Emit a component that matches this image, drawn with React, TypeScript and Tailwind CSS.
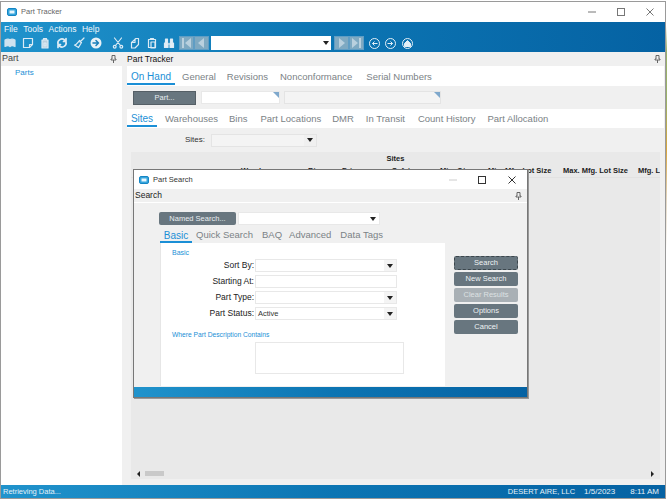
import React from "react";

const Logo = () => (
  <svg width="10" height="8" viewBox="0 0 10 8" className="shrink-0">
    <rect x="0.5" y="0.5" width="9" height="7" rx="1.5" fill="#35a5dc" stroke="#1585c4" />
    <rect x="2.5" y="2.5" width="5" height="3" fill="#e8f6fd" />
  </svg>
);

const Pin = () => (
  <svg width="7" height="8" viewBox="0 0 7 8" className="shrink-0">
    <path d="M2 .5h3v3.5h1v1H1V4h1zM3.5 5v3" fill="none" stroke="#666" strokeWidth="1" />
  </svg>
);

const Caret = () => (
  <svg width="6" height="4" viewBox="0 0 6 4"><path d="M0 0h6L3 4z" fill="#222" /></svg>
);

const T = ({ d, w = 17 }: { d: React.ReactNode; w?: number }) => (
  <div className="flex justify-center items-center h-[15px] shrink-0" style={{ width: w }}>
    <svg width="12" height="12" viewBox="0 0 12 12" fill="none" stroke="#dcebf5" strokeWidth="1.2" strokeLinecap="round" strokeLinejoin="round">{d}</svg>
  </div>
);

const NavBox = ({ children }: { children: React.ReactNode }) => (
  <div className="w-[15px] h-[14px] bg-[#7ea9c2] border border-[#5f9dc4] flex items-center justify-center shrink-0">
    <svg width="9" height="10" viewBox="0 0 9 10" fill="#b9d0de">{children}</svg>
  </div>
);

const Circ = ({ children }: { children: React.ReactNode }) => (
  <div className="w-[11px] h-[11px] rounded-full border border-[#e3eff7] flex items-center justify-center shrink-0">
    <svg width="7" height="7" viewBox="0 0 7 7" fill="none" stroke="#e3eff7" strokeWidth="1">{children}</svg>
  </div>
);

const DBtn = ({ label, dim, cls = "" }: { label: string; dim?: boolean; cls?: string }) => (
  <div className={`w-[64px] h-[14px] rounded-[2px] flex items-center justify-center text-[7.5px] leading-none ${dim ? "bg-[#a9b0b5] text-[#dde1e3]" : "bg-[#68767f] text-[#eef2f4]"} ${cls}`}>{label}</div>
);

const Field = ({ value, caret, w = "w-[142px]" }: { value?: string; caret?: boolean; w?: string }) => (
  <div className={`${w} h-[13px] bg-white border border-[#e8e8e8] flex items-center justify-between pl-[2px] text-[7.5px] text-[#333]`}>
    <span>{value}</span>
    {caret && <div className="w-[12px] h-full bg-[#f4f4f4] flex items-center justify-center"><Caret /></div>}
  </div>
);

const Row = ({ label, children }: { label: string; children: React.ReactNode }) => (
  <div className="flex items-center h-[13px] mb-[3px]">
    <div className="w-[94px] pr-[1px] text-right text-[8.5px] text-[#222] leading-none">{label}</div>
    {children}
  </div>
);

export default function App() {
  return (
    <div className="relative w-[667px] h-[500px] overflow-hidden bg-white flex flex-col text-[#222] font-['Liberation_Sans',Arial,sans-serif]">
      <div className="h-[1px] overflow-hidden bg-white flex items-end pl-[14px] text-[10px] leading-[10px] text-[#777] whitespace-nowrap">
        <span className="w-[118px]">SERVICE DASHBOARD</span><span className="w-[58px]">PARTS</span><span className="w-[50px]">ROLL</span><span className="w-[116px]">SERVICE DASHBOARD</span><span>PARTS WI-DGET</span>
      </div>
      <div className="flex-1 flex min-h-0">
        <div className="w-[666px] flex flex-col border-x border-b border-t border-[#9a9a9a] min-h-0">
          {/* title bar */}
          <div className="h-[20px] bg-white flex items-center pl-[6px] shrink-0">
            <Logo />
            <span className="ml-[4px] text-[7.5px] text-[#666]">Part Tracker</span>
            <div className="ml-auto flex items-center">
              <svg width="8" height="2" className="mr-[21px]"><path d="M0 1h8" stroke="#777" /></svg>
              <svg width="8" height="8" className="mr-[21px]"><rect x=".5" y=".5" width="7" height="7" fill="none" stroke="#777" /></svg>
              <svg width="8" height="8" className="mr-[11px]"><path d="M.5.5l7 7M7.5.5l-7 7" stroke="#777" /></svg>
            </div>
          </div>
          {/* blue band */}
          <div className="h-[30px] shrink-0 bg-[linear-gradient(90deg,#2093cc,#0c75b3_50%,#0562a3)] flex flex-col">
            <div className="h-[14px] flex items-center text-[8.5px] text-[#f2f8fc] pl-[3px] gap-[5.5px] leading-none">
              <span>File</span><span>Tools</span><span>Actions</span><span>Help</span>
            </div>
            <div className="h-[16px] pb-[2px] flex items-center">
              <T w={18} d={<path d="M6 3C5 2 3 2 1 3v6.500c2-1 4-1 5 0 1-1 3-1 5 0V3C9 2 7 2 6 3zM6 3v6.500" fill="#cfe3f0" stroke="#cfe3f0" />} />
              <T d={<path d="M1.500 1.500h9v6l-3 3h-6zM10.500 7.500h-3v3" />} />
              <T d={<path d="M3 3h6v8H3zM4.500 3V1.500h3V3M5 6h2v3H5z" fill="#b9cfdd" />} />
              <T d={<path d="M2 7a4 4 0 0 1 6.500-4L10 4.500M10 5a4 4 0 0 1-6.500 4L2 7.500M10 1.500v3H7.500M2 10.500v-3h2.500" strokeWidth="1.700" />} />
              <T d={<path d="M11 1L7 5M6.500 3.500l2 2-3 5L1.500 8c2 0 3-2 5-4.500z" />} />
              <T d={<><circle cx="6" cy="6" r="5.500" fill="#e8f2f8" stroke="none" /><path d="M3 6h5.500M6 3.500L8.500 6 6 8.500" stroke="#1a7fb9" strokeWidth="1.500" /></>} />
              <div className="w-[5px]" />
              <T d={<><path d="M2.500 1l6 7.500M9.500 1l-6 7.500" /><circle cx="2.700" cy="9.800" r="1.400" /><circle cx="9.300" cy="9.800" r="1.400" /></>} />
              <T d={<path d="M7 1.500h2.500v6L6 11H2.500V5.500zM2.500 5.500H6V2" />} />
              <T d={<path d="M2.500 2.500h7v8h-7zM4.500 2.500V1.500h3v1M5 5h4v6H5z" />} />
              <T d={<path d="M1.500 6h3.500v4.500H1.500zM7 6h3.500v4.500H7zM2.500 6V2h2v4M7.500 6V2h2v4M5 7h2" fill="#e3eff7" />} />
              <div className="w-[2px]" />
              <NavBox><path d="M0 0h2v10H0zM9 0v10L3 5z" /></NavBox>
              <NavBox><path d="M7 0v10L1 5z" /></NavBox>
              <div className="w-[120px] h-[14px] ml-[2px] bg-white flex items-center justify-end pr-[2px] shrink-0"><Caret /></div>
              <div className="w-[3px]" />
              <NavBox><path d="M2 0v10l6-5z" /></NavBox>
              <NavBox><path d="M0 0v10l6-5zM7 0h2v10H7z" /></NavBox>
              <div className="w-[5px]" />
              <Circ><path d="M6.500 3.500h-5M3.500 1.500l-2 2 2 2" /></Circ>
              <div className="w-[5px]" />
              <Circ><path d="M.500 3.500h5M3.500 1.500l2 2-2 2" /></Circ>
              <div className="w-[6px]" />
              <Circ><path d="M.500 3.500l3-3 3 3v3h-6z" fill="#e3eff7" /></Circ>
            </div>
          </div>
          {/* body */}
          <div className="flex-1 min-h-0 flex bg-[#f0f0f0]">
            <div className="w-[121px] flex flex-col shrink-0">
              <div className="h-[14px] flex items-center justify-between pl-[1px] pr-[5px] text-[9px] shrink-0"><span className="text-[#444]">Part</span><Pin /></div>
              <div className="flex-1 bg-white pl-[14px] pt-[1px] text-[8px] text-[#1b8fd6] leading-[12px]">Parts</div>
            </div>
            <div className="flex-1 flex flex-col min-w-0 pl-[5px]">
              <div className="h-[14px] flex items-center justify-between pr-[4px] text-[8.5px] text-[#111] shrink-0"><span>Part Tracker</span><Pin /></div>
              <div className="h-[20px] bg-white mr-[1px] flex items-stretch text-[9.5px] text-[#7b8286] shrink-0 whitespace-nowrap">
                <div className="w-[48px] mb-[1px] border-b-2 border-[#1b8fd6] text-[#1b8fd6] text-center pt-[3px] text-[10px]">On Hand</div>
                <span className="ml-[7px] pt-[4px]">General</span>
                <span className="ml-[11px] pt-[4px]">Revisions</span>
                <span className="ml-[12px] pt-[4px]">Nonconformance</span>
                <span className="ml-[14px] pt-[4px]">Serial Numbers</span>
              </div>
              <div className="h-[23px] flex items-center pl-[6px] shrink-0">
                <div className="w-[63px] h-[14px] bg-[#68767f] border border-[#555f66] text-[7.5px] text-[#e9edef] flex items-center justify-center">Part...</div>
                <div className="relative w-[79px] h-[13px] bg-white ml-[5px] border border-[#e8e8e8]"><div className="absolute top-0 right-0 w-0 h-0 border-l-[6px] border-l-transparent border-t-[6px] border-t-[#7fa8cc]" /></div>
                <div className="relative w-[157px] h-[13px] bg-[#f4f4f4] ml-[4px] border border-[#e4e4e4]"><div className="absolute top-0 right-0 w-0 h-0 border-l-[6px] border-l-transparent border-t-[6px] border-t-[#7fa8cc]" /></div>
              </div>
              <div className="h-[19px] bg-white mr-[1px] flex items-stretch text-[9.5px] text-[#7b8286] shrink-0 whitespace-nowrap">
                <div className="w-[30px] mb-[1px] border-b-2 border-[#1b8fd6] text-[#1b8fd6] text-center pt-[2px] text-[10px]">Sites</div>
                <span className="ml-[8px] pt-[3px]">Warehouses</span>
                <span className="ml-[11px] pt-[3px]">Bins</span>
                <span className="ml-[13px] pt-[3px]">Part Locations</span>
                <span className="ml-[11px] pt-[3px]">DMR</span>
                <span className="ml-[12px] pt-[3px]">In Transit</span>
                <span className="ml-[13px] pt-[3px]">Count History</span>
                <span className="ml-[12px] pt-[3px]">Part Allocation</span>
              </div>
              <div className="h-[24px] flex items-center shrink-0 pl-[58px] text-[8px] text-[#333]">
                <span className="w-[26px]">Sites:</span>
                <div className="w-[106px] h-[13px] bg-[#f4f4f4] border border-[#e4e4e4] flex justify-end"><div className="w-[12px] bg-[#f0f0f0] flex items-center justify-center"><Caret /></div></div>
              </div>
              <div className="flex-1 ml-[4px] mr-[5px] mb-[6px] bg-[#e9e9e9] flex flex-col min-h-0">
                <div className="h-[13px] text-center text-[7.5px] font-bold text-[#222] flex items-center justify-center">Sites</div>
                <div className="h-[13px] flex items-center text-[7.5px] font-bold text-[#222] whitespace-nowrap overflow-hidden border-b border-[#e2e2e2] pl-[110px]">
                  <span className="w-[67px] shrink-0">Warehouse</span>
                  <span className="w-[34px] shrink-0">Bin</span>
                  <span className="w-[50px] shrink-0">Primary</span>
                  <span className="w-[48px] shrink-0">Safety</span>
                  <span className="w-[48px] shrink-0">Min. Qty</span>
                  <span className="w-[75px] shrink-0">Min. Mfg. Lot Size</span>
                  <span className="w-[75px] shrink-0">Max. Mfg. Lot Size</span>
                  <span className="shrink-0">Mfg. L</span>
                </div>
                <div className="flex-1" />
                <div className="h-[11px] flex items-center px-[6px] justify-between">
                  <div className="flex items-center gap-[3px]">
                    <svg width="3" height="6"><path d="M3 0v6L0 3z" fill="#222" /></svg>
                    <div className="w-[19px] h-[5px] ml-[2px] bg-[#c9c9c9]" />
                  </div>
                  <svg width="3" height="6"><path d="M0 0v6l3-3z" fill="#222" /></svg>
                </div>
              </div>
            </div>
          </div>
          {/* status */}
          <div className="h-[13px] shrink-0 bg-[linear-gradient(90deg,#2093cc,#0c75b3_50%,#0562a3)] flex items-center pl-[2px] text-[7.5px] text-[#e6f1f8] leading-none">
            <span>Retrieving Data...</span>
            <span className="ml-auto text-[7.5px]">DESERT AIRE, LLC</span>
            <span className="ml-[9px] text-[8px]">1/5/2023</span>
            <span className="ml-[15px] mr-[6px] text-[8px]">8:11 AM</span>
          </div>
        </div>
        <div className="w-[1px] bg-[linear-gradient(180deg,#fff_5%,#9bb26a_10%,#9bb26a_20%,#d9a63f_30%,#e4d8c4_40%,#fff_50%)]" />
      </div>
      <div className="h-[1px] bg-white shrink-0" />

      {/* dialog */}
      <div className="absolute left-[133px] top-[169px] w-[395px] h-[229px] border border-[#777] bg-[#f0f0f0] flex flex-col shadow-[1px_1px_0_#999]">
        <div className="h-[19px] bg-white flex items-center pl-[5px] shrink-0">
          <Logo />
          <span className="ml-[4px] text-[7.5px] text-[#333]">Part Search</span>
          <div className="ml-auto flex items-center">
            <svg width="8" height="2" className="mr-[21px]"><path d="M0 1h8" stroke="#ccc" /></svg>
            <svg width="8" height="8" className="mr-[22px]"><rect x=".5" y=".5" width="7" height="7" fill="none" stroke="#333" /></svg>
            <svg width="8" height="8" className="mr-[11px]"><path d="M.5.5l7 7M7.5.5l-7 7" stroke="#333" /></svg>
          </div>
        </div>
        <div className="h-[14px] flex items-center justify-between pl-[1px] pr-[5px] text-[8.5px] text-[#222] border-b border-white shrink-0"><span>Search</span><Pin /></div>
        <div className="flex-1 flex min-h-0 pl-[25px]">
          <div className="w-[286px] flex flex-col">
            <div className="flex items-center pt-[9px] shrink-0">
              <div className="w-[77px] h-[13px] bg-[#68767f] rounded-[2px] text-[7.5px] text-[#e9edef] flex items-center justify-center">Named Search...</div>
              <div className="w-[142px] h-[13px] ml-[2px] bg-white border border-[#e8e8e8] flex justify-end"><div className="w-[12px] flex items-center justify-center"><Caret /></div></div>
            </div>
            <div className="h-[15px] mt-[3px] flex items-stretch text-[9.5px] text-[#7b8286] whitespace-nowrap shrink-0 pl-[1px]">
              <div className="w-[32px] border-b-2 border-[#1b8fd6] text-[#1b8fd6] text-center text-[10px]">Basic</div>
              <span className="ml-[4px]">Quick Search</span>
              <span className="ml-[9px]">BAQ</span>
              <span className="ml-[7px]">Advanced</span>
              <span className="ml-[9px]">Data Tags</span>
            </div>
            <div className="flex-1 bg-white ml-[1px] border-l border-[#e6e6e6] min-h-0">
              <div className="pl-[11px] pt-[5px] text-[7px] text-[#1b8fd6] leading-[9px] h-[16px]">Basic</div>
              <Row label="Sort By:"><Field caret /></Row>
              <Row label="Starting At:"><Field /></Row>
              <Row label="Part Type:"><Field caret /></Row>
              <Row label="Part Status:"><Field value="Active" caret /></Row>
              <div className="pl-[11px] mt-[10px] text-[6.7px] text-[#1b8fd6] leading-[9px]">Where Part Description Contains</div>
              <div className="ml-[94px] mt-[3px] w-[149px] h-[32px] border border-[#e8e8e8]" />
            </div>
          </div>
          <div className="flex flex-col gap-[2px] pl-[9px] pt-[53px]">
            <DBtn label="Search" cls="border border-dashed border-[#3c464c]" />
            <DBtn label="New Search" />
            <DBtn label="Clear Results" dim />
            <DBtn label="Options" />
            <DBtn label="Cancel" />
          </div>
        </div>
        <div className="h-[10px] mt-[1px] shrink-0 bg-[linear-gradient(90deg,#2093cc,#0c75b3_50%,#0562a3)]" />
      </div>
    </div>
  );
}
